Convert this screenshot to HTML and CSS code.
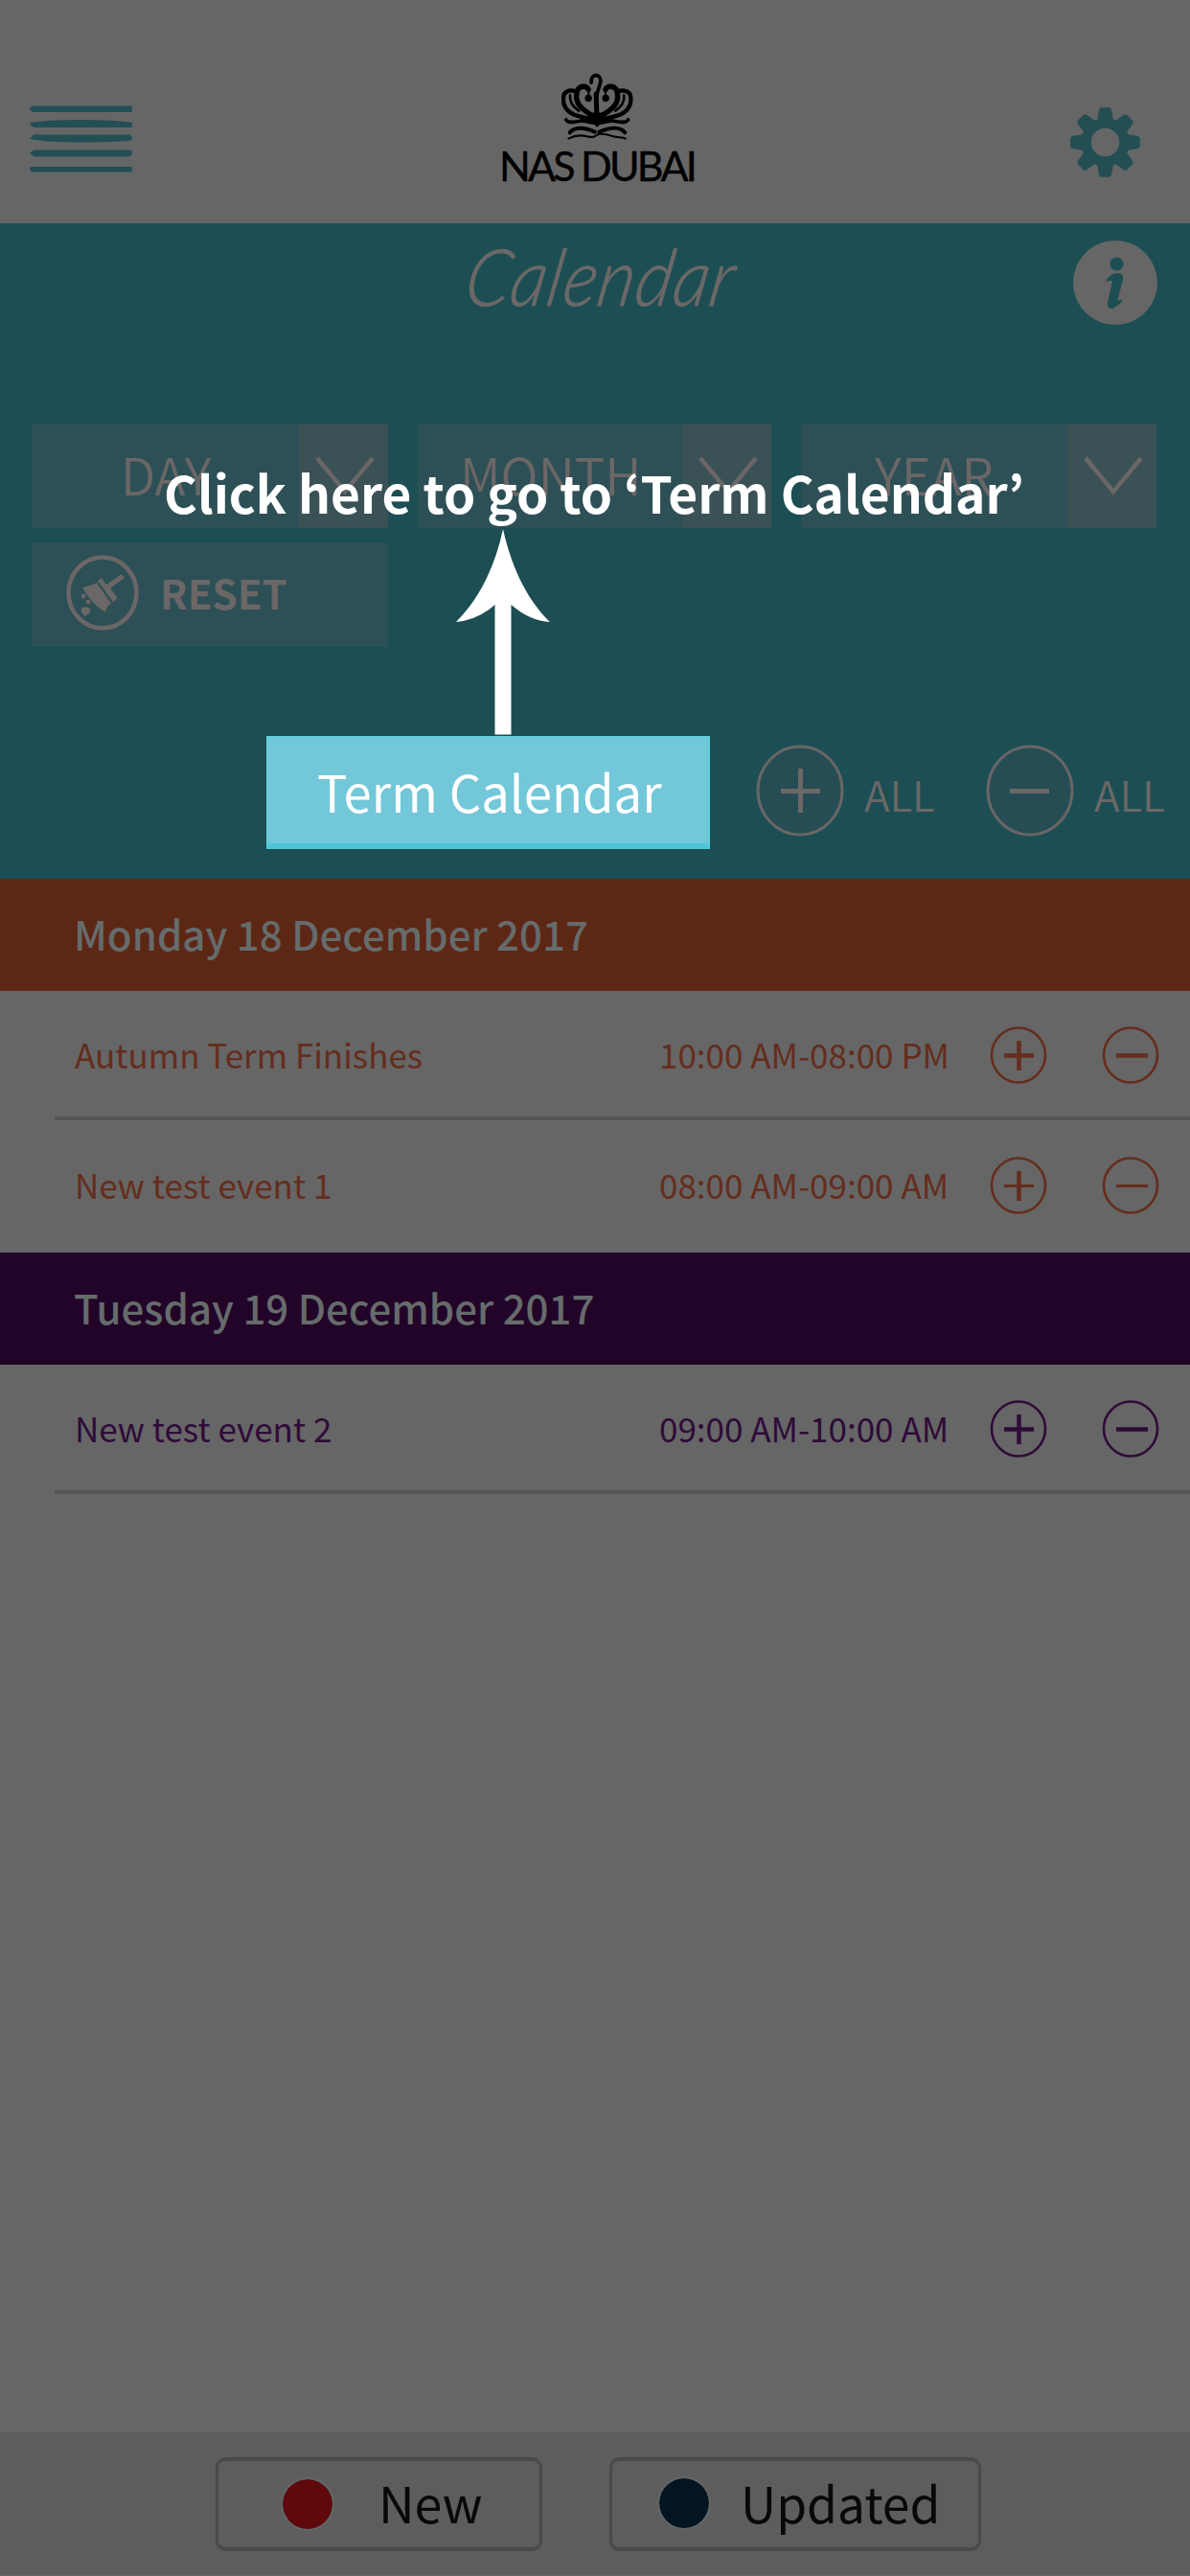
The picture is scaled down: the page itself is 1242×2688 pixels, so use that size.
FILE: index.html
```html
<!DOCTYPE html>
<html lang="en">
<head>
<meta charset="utf-8">
<title>NAS Dubai – Calendar</title>
<link rel="stylesheet" href="styles.css">
</head>
<body>
<svg class="defs" aria-hidden="true">
  <symbol id="plus" viewBox="0 0 60 60">
    <ellipse cx="30" cy="30" rx="28" ry="28.5" fill="none" stroke="currentColor" stroke-width="2.6"/>
    <path d="M15 30.5H46" stroke="currentColor" stroke-width="var(--bar)"/>
    <path d="M30.5 15V46" stroke="currentColor" stroke-width="4.5"/>
  </symbol>
  <symbol id="minus" viewBox="0 0 60 60">
    <ellipse cx="30" cy="30" rx="28" ry="28.5" fill="none" stroke="currentColor" stroke-width="2.6"/>
    <path class="bar" d="M15 30.5H48" stroke="currentColor"/>
  </symbol>
  <symbol id="chevron" viewBox="0 0 62 42">
    <path d="M2 2L31 37L60 2" fill="none" stroke="currentColor" stroke-width="4.5"/>
  </symbol>
</svg>
<div class="app">
  <header class="header">
    <svg class="menu" viewBox="0 0 107 70">
      <path d="M3 .5H105Q107 .5 107 4Q107 7 105 7H4Q0 5 0 4Q0 2 3 .5ZM0 18Q20 15 54 15Q90 15 107 18V21Q107 23 105 23H5Q1 22 0 18ZM4 30.500H105L107 34Q107 36 104 37Q80 38.500 54 38.500Q20 38.500 0 35ZM4 46.500H105Q107 47 107 49Q106 53.500 102 53.500H5L0 50ZM1 64H106Q107 64 107 67Q107 69.500 106 69.500H2Q0 69 0 66Z" fill="#224e54"/>
    </svg>
    <div class="brand">
      <svg class="crown" viewBox="320 48 224 212" fill="none" stroke="#000" stroke-linecap="round" stroke-width="13">
        <path d="M364 106C352 101 338 103 329 113C320 140 330 164 358 178C382 188 405 186 428 200"/>
        <path d="M496 106C508 101 524 103 533 113C542 140 532 164 504 178C480 188 457 186 434 200"/>
        <path d="M404 100C398 87 380 88 371 100C362 125 368 148 392 165C410 178 422 184 430 200" stroke-width="16"/>
        <path d="M457 100C464 87 482 88 491 100C500 125 494 148 470 165C450 178 440 184 432 200" stroke-width="16"/>
        <path d="M347 118C345 137 354 153 374 166M515 118C517 137 508 153 488 166" stroke-width="8"/>
        <path d="M405 104L404 128M457 104L458 128" stroke-width="6"/>
        <path d="M413 78C410 50 440 50 442 70C444 88 424 108 428 150" stroke-width="11"/>
        <path d="M428 114L431 202" stroke-width="15"/>
        <path d="M334 194C340 208 366 200 386 197L428 205M528 194C522 208 496 200 476 197L434 205" stroke-width="11"/>
        <path d="M346 234C360 216 390 216 424 232M518 234C504 216 474 216 438 232" stroke-width="12"/>
        <path d="M342 253C356 246 374 240 395 245S420 250 430 242S462 240 478 245S508 248 520 253" stroke-width="6"/>
        <circle cx="404" cy="127" r="11" fill="#000" stroke="none"/>
        <circle cx="458" cy="127" r="11" fill="#000" stroke="none"/>
        <path d="M400 172H460L446 202L431 218L416 202Z" fill="#000" stroke="none"/>
      </svg>
      <span class="brand-name">NAS DUBAI</span>
    </div>
    <svg class="gear" viewBox="-36.500 -36.500 73 73">
      <g fill="#234e54">
        <path id="t" d="M-9 -20L-6.500 -34Q-6 -36.300 -4 -36.300H4Q6 -36.300 6.500 -34L9 -20Z"/>
        <use href="#t" transform="rotate(45)"/><use href="#t" transform="rotate(90)"/><use href="#t" transform="rotate(135)"/>
        <use href="#t" transform="rotate(180)"/><use href="#t" transform="rotate(225)"/><use href="#t" transform="rotate(270)"/><use href="#t" transform="rotate(315)"/>
      </g>
      <circle r="20" fill="none" stroke="#234e54" stroke-width="10.500"/>
    </svg>
  </header>

  <section class="panel">
    <div class="title-row">
      <h1 class="title">Calendar</h1>
      <svg class="info" viewBox="0 0 88 88">
        <circle cx="44" cy="44" r="44" fill="#666"/>
        <circle cx="45.500" cy="24.500" r="7" fill="#1c4e53"/>
        <path d="M34 43Q38 34 47 34Q53 34 52 41L46 63Q49 61 52 62Q50 66 41 71Q35 71 36 65L41 42Q38 41 34 43Z" fill="#1c4e53"/>
      </svg>
    </div>
    <div class="filters">
      <div class="select day"><span>DAY</span><i><svg viewBox="0 0 62 42"><use href="#chevron"/></svg></i></div>
      <div class="select month"><span>MONTH</span><i><svg viewBox="0 0 62 42"><use href="#chevron"/></svg></i></div>
      <div class="select year"><span>YEAR</span><i><svg viewBox="0 0 62 42"><use href="#chevron"/></svg></i></div>
      <div class="reset">
        <svg viewBox="0 0 76 80">
          <ellipse cx="38" cy="39.500" rx="35.500" ry="37" fill="none" stroke="#6b6766" stroke-width="4.500"/>
          <g fill="#6b6766">
            <path d="M17 34Q27 32 32 29L47 51Q42 53 41 60Q26 51 17 34Z"/>
            <path d="M33 27L37 24L42 31L58 20L61 24L46 35L53 44Q53 47 49 49Z"/>
            <rect x="16" y="41" width="4" height="4"/><rect x="21" y="47" width="4" height="4"/>
            <path d="M16 56L20 54L25 56L25 60L20 64L16 60Z"/>
          </g>
        </svg>
        <span>RESET</span>
      </div>
    </div>
    <div class="tools">
      <div class="term">Term Calendar</div>
      <svg class="round" viewBox="0 0 92 96">
        <ellipse cx="46" cy="48" rx="44" ry="46" fill="#254d53" stroke="#686666" stroke-width="3"/>
        <path d="M26 48.500H67M46.500 25V71" stroke="#6b6867" stroke-width="5"/>
      </svg>
      <span class="all">ALL</span>
      <svg class="round second" viewBox="0 0 92 96">
        <ellipse cx="46" cy="48" rx="44" ry="46" fill="#254d53" stroke="#686666" stroke-width="3"/>
        <path d="M25 48.500H66" stroke="#6b6867" stroke-width="5"/>
      </svg>
      <span class="all">ALL</span>
    </div>
    <div class="coach">
      <p>Click here to go to ‘Term Calendar’</p>
      <svg viewBox="0 0 100 216"><path d="M50 0C58 36 73 72 99 97Q78 96 58.500 79V214.500H41.500V79Q24 95 1 97C26 72 42 38 50 0Z" fill="#fff"/></svg>
    </div>
  </section>

  <section class="group orange">
    <h2>Monday 18 December 2017</h2>
    <div class="event"><span class="name">Autumn Term Finishes</span><span class="time">10:00 AM-08:00 PM</span><svg><use href="#plus"/></svg><svg><use href="#minus"/></svg></div>
    <div class="event fine"><span class="name">New test event 1</span><span class="time">08:00 AM-09:00 AM</span><svg><use href="#plus"/></svg><svg><use href="#minus"/></svg></div>
  </section>
  <section class="group purple">
    <h2>Tuesday 19 December 2017</h2>
    <div class="event"><span class="name">New test event 2</span><span class="time">09:00 AM-10:00 AM</span><svg><use href="#plus"/></svg><svg><use href="#minus"/></svg></div>
  </section>

  <footer class="footer">
    <div class="key new"><b></b><span>New</span></div>
    <div class="key updated"><b></b><span>Updated</span></div>
  </footer>
</div>
</body>
</html>
```
FILE: styles.css
```css
* { box-sizing: border-box; }
body { margin: 0; background: #666; font-family: "Noto Sans CJK JP", "Noto Sans", sans-serif; }
h1, h2, p { margin: 0; }
svg { display: block; flex: none; }
span, p { white-space: nowrap; }
.defs { position: absolute; width: 0; height: 0; }
.app { width: 1242px; height: 2688px; display: flex; flex-direction: column; overflow: hidden; }

.header { height: 233px; flex: none; display: grid; grid-template-columns: 200px 1fr 200px; padding: 0 52px 0 31px; }
.menu { width: 107px; height: 70px; margin-top: 110px; }
.brand { display: flex; flex-direction: column; align-items: center; padding: 76px 0 0 25px; }
.crown { width: 75px; height: 71px; }
.brand-name { font: 400 43px/52px Lato, sans-serif; letter-spacing: -2.8px; margin-top: 0; color: #000; -webkit-text-stroke: .4px #000; }
.gear { width: 73px; height: 73px; margin-top: 111.500px; justify-self: end; }

.panel { position: relative; height: 684px; flex: none; background: #1c4e53; }
.title-row { height: 209px; display: grid; grid-template-columns: 1fr 300px 1fr; padding: 0 34px; }
.title { grid-column: 2; justify-self: center; font: italic 300 82px/100px Lato, sans-serif; letter-spacing: 1.5px; color: #6b6968; transform: skewX(-10deg) scaleX(.9); margin: 4px 0 0 -4px; -webkit-text-stroke: 1px #6b6968; }
.info { width: 88px; height: 88px; justify-self: end; margin: 18px 0 0; }
.filters { display: grid; grid-template-columns: 371px 369px 371px; column-gap: 31px; row-gap: 15px; padding-left: 34px; }
.select, .reset { height: 109px; background: #2d5056; color: #6b6766; display: flex; }
.select span { flex: 1; font-weight: 350; font-size: 53px; line-height: 100px; padding-top: 2px; }
.day span { padding-left: 92px; }
.month span { padding-left: 44px; }
.year span { padding-left: 77px; }
.select i { width: 93px; background: #3a5156; padding: 34px 0 0 17px; }
.select i svg { width: 62px; height: 42px; }
.reset { padding-left: 35px; }
.reset svg { width: 76px; height: 80px; margin-top: 13px; }
.reset span { font-weight: 700; font-size: 42px; line-height: 103px; padding-left: 22px; }
.tools { display: flex; height: 118px; margin-top: 93px; padding-left: 278px; }
.term { width: 463px; height: 118px; background: #72c7d9; border: 2px solid #62cddd; border-bottom: 6px solid #4cc5d6; color: #fff; font-size: 52.600px; line-height: 110px; padding-left: 51px; }
.round { width: 92px; height: 96px; margin: 9px 0 0 48px; }
.all { color: #6b6867; font-size: 44px; font-weight: 350; line-height: 121px; padding-left: 21px; width: 101px; }
.round.second { margin-left: 47px; }
.coach { position: absolute; left: 0; top: 259px; width: 1242px; color: #fff; }
.coach p { font-weight: 700; font-size: 53.200px; line-height: 42px; padding-left: 171px; }
.coach svg { position: absolute; left: 475px; top: 60px; width: 100px; height: 216px; }

.group h2 { height: 117px; font-size: 42px; font-weight: 500; line-height: 113px; padding-left: 77px; color: #666b6b; }
.orange h2 { background: #5d2715; }
.purple h2 { background: #220429; }
.orange { color: #642d1d; }
.purple { color: #2f0b38; }
.event { --bar: 4.5px; height: 135px; margin-left: 57px; border-bottom: 4px solid #555; display: flex; font-size: 35px; line-height: 132px; }
.bar { stroke-width: var(--bar); }
.event.fine { --bar: 3px; height: 138px; border-bottom: 0; padding-top: 1px; }
.name { width: 610px; padding-left: 21px; }
.time { width: 366px; padding-left: 21px; }
.event svg { width: 60px; height: 60px; margin: 37px 57px 0 0; }
.event svg:last-child { margin-right: 0; }

.footer { margin-top: auto; height: 150px; background: #5d5d5d; display: flex; padding: 26px 0 0 225px; border-bottom: 1px solid #666; }
.key { height: 98px; border: 3px solid #4a4a4a; border-width: 4px 3px; border-radius: 11px; display: flex; color: #080808; font-size: 52px; line-height: 85px; }
.key b { width: 52px; height: 52px; border-radius: 50%; margin-top: 19px; outline: 2px solid #626566; }
.new { width: 341px; margin-right: 70px; }
.new b { background: #5f090c; margin-left: 67px; }
.new span { padding-left: 48px; }
.updated { width: 388px; font-size: 51.500px; }
.updated b { background: #041522; margin: 18px 0 0 49px; }
.updated span { padding-left: 33px; }
```
